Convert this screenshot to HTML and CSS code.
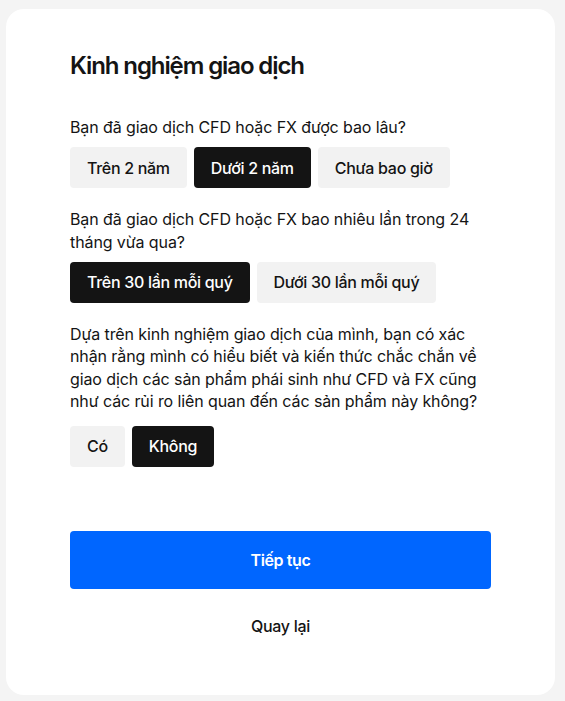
FILE: index.html
```html
<!DOCTYPE html>
<html lang="vi">
<head>
<meta charset="utf-8">
<title>Kinh nghiệm giao dịch</title>
<link rel="stylesheet" href="styles.css">
</head>
<body>
<main class="card">
  <h1 class="title">Kinh nghiệm giao dịch</h1>

  <section class="question">
    <p class="q-text">Bạn đã giao dịch CFD hoặc FX được bao lâu?</p>
    <div class="options">
      <button class="opt">Trên 2 năm</button>
      <button class="opt opt-active">Dưới 2 năm</button>
      <button class="opt">Chưa bao giờ</button>
    </div>
  </section>

  <section class="question">
    <p class="q-text">Bạn đã giao dịch CFD hoặc FX bao nhiêu lần trong 24 tháng vừa qua?</p>
    <div class="options">
      <button class="opt opt-active">Trên 30 lần mỗi quý</button>
      <button class="opt">Dưới 30 lần mỗi quý</button>
    </div>
  </section>

  <section class="question question-last">
    <p class="q-text">Dựa trên kinh nghiệm giao dịch của mình, bạn có xác nhận rằng mình có hiểu biết và kiến thức chắc chắn về giao dịch các sản phẩm phái sinh như CFD và FX cũng như các rủi ro liên quan đến các sản phẩm này không?</p>
    <div class="options">
      <button class="opt">Có</button>
      <button class="opt opt-active">Không</button>
    </div>
  </section>

  <button class="primary">Tiếp tục</button>
  <button class="back">Quay lại</button>
</main>
</body>
</html>
```

FILE: styles.css
```css
* { box-sizing: border-box; }
html, body { margin: 0; }
body {
  background: #f4f4f4;
  padding: 9px 10px 6px 6px;
  font-family: Inter, "Noto Sans", sans-serif;
  color: #141414;
}
.card {
  background: #fff;
  border-radius: 18px;
  width: 549px;
  height: 686px;
  padding: 41px 64px 0 64px;
  display: flex;
  flex-direction: column;
}
.title {
  margin: 0;
  font-size: 24px;
  line-height: 32px;
  font-weight: 600;
  letter-spacing: -1.1px;
}
.question { margin-top: 20px; }
.question:first-of-type { margin-top: 34px; }
.q-text {
  margin: 0 0 8.5px 0;
  font-size: 16px;
  line-height: 22.5px;
  font-weight: 400;
  letter-spacing: -0.1px;
}
.question-last .q-text { margin-bottom: 13px; }
.options {
  display: flex;
  gap: 7px;
}
.opt {
  height: 41px;
  padding: 0 17px;
  border: none;
  border-radius: 4px;
  background: #f2f2f2;
  color: #141414;
  font-family: inherit;
  font-size: 16px;
  font-weight: 500;
  letter-spacing: -0.3px;
  cursor: pointer;
}
.opt-active {
  background: #141414;
  color: #fff;
}
.primary {
  margin-top: 64px;
  height: 58px;
  width: 100%;
  border: none;
  border-radius: 4px;
  background: #0066ff;
  color: #fff;
  font-family: inherit;
  font-size: 16px;
  font-weight: 600;
  letter-spacing: -0.4px;
}
.back {
  margin-top: 26px;
  align-self: center;
  border: none;
  background: none;
  padding: 0;
  font-family: inherit;
  font-size: 16px;
  line-height: 22.5px;
  font-weight: 500;
  color: #141414;
  letter-spacing: -0.3px;
}
```
